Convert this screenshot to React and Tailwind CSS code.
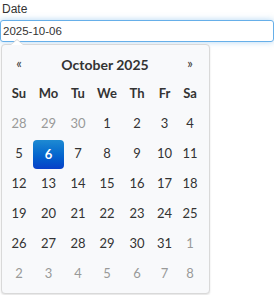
import React from 'react';

const cols = ['w-[28px]', 'w-[31px]', 'w-[28px]', 'w-[30px]', 'w-[30px]', 'w-[25px]', 'w-[26px]'];
const weekdays = ['Su', 'Mo', 'Tu', 'We', 'Th', 'Fr', 'Sa'];

// 6 weeks shown for October 2025
const weeks = [
  [[28, 1], [29, 1], [30, 1], [1], [2], [3], [4]],
  [[5], [6], [7], [8], [9], [10], [11]],
  [[12], [13], [14], [15], [16], [17], [18]],
  [[19], [20], [21], [22], [23], [24], [25]],
  [[26], [27], [28], [29], [30], [31], [1, 1]],
  [[2, 1], [3, 1], [4, 1], [5, 1], [6, 1], [7, 1], [8, 1]],
];

function App() {
  return (
    <div className="w-[274px] h-[295px] bg-white font-['Liberation_Sans',sans-serif] text-[#333]">
      <label className="block h-[20px] pl-[2px] pt-[2px] text-[12px] leading-[14px]">Date</label>
      <input
        type="text"
        defaultValue="2025-10-06"
        className="block w-[274px] h-[22px] px-[2px] text-[11.5px] text-[#333] border border-[#66afe9] rounded-[3px] outline-none shadow-[0_0_6px_rgba(102,175,233,0.5)]"
      />

      {/* popup calendar */}
      <div className="relative mt-[2px] ml-[1px] w-[209px] h-[250px] border border-[#d9d9d9] rounded-[4px] bg-[#f8f9fb] shadow-[0_1px_2px_rgba(0,0,0,0.12)] pl-[3px] pt-[4px] font-['Lato',sans-serif]">
        <div className="absolute -top-[6px] left-[8px] w-0 h-0 border-l-[7px] border-r-[7px] border-b-[6px] border-l-transparent border-r-transparent border-b-[#d9d9d9]" />
        <div className="absolute -top-[5px] left-[9px] w-0 h-0 border-l-[6px] border-r-[6px] border-b-[5px] border-l-transparent border-r-transparent border-b-white" />

        <div className="flex h-[30px] items-center text-[#333]">
          <div className="w-[28px] text-center text-[13px]">«</div>
          <div className="w-[144px] text-center text-[14px] font-bold">October 2025</div>
          <div className="w-[26px] text-center text-[13px]">»</div>
        </div>
        <div className="flex h-[30px] items-center">
          {weekdays.map((d, i) => (
            <div key={d} className={`${cols[i]} text-center text-[13px] font-bold`}>{d}</div>
          ))}
        </div>
        {weeks.map((week, r) => (
          <div key={r} className="flex h-[30px]">
            {week.map(([n, muted], i) => {
              const active = r === 1 && n === 6;
              return (
                <div key={i} className={`${cols[i]} flex items-center justify-center`}>
                  {active ? (
                    <div className="w-[31px] h-[29px] mt-[1px] flex items-center justify-center rounded-[4px] bg-gradient-to-b from-[#1e8ad2] to-[#0a3fc8] text-white text-[13px] font-bold">
                      {n}
                    </div>
                  ) : (
                    <span className={`text-[13px] ${muted ? 'text-[#999]' : 'text-[#333]'}`}>{n}</span>
                  )}
                </div>
              );
            })}
          </div>
        ))}
      </div>
    </div>
  );
}

export default App;
